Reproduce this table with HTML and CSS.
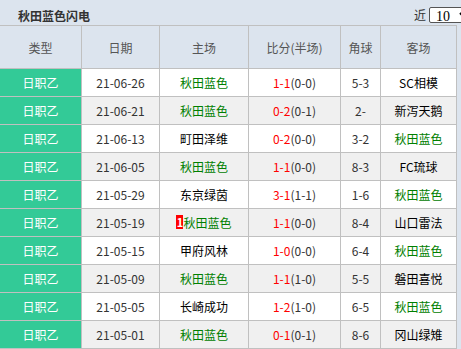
FILE: index.html
```html
<!DOCTYPE html>
<html lang="zh">
<head>
<meta charset="utf-8">
<link rel="stylesheet" href="styles.css">
</head>
<body>
<div class="bar">
  <span class="title">秋田蓝色闪电</span>
  <span class="pick">近 <select class="sel"><option>10</option><option>20</option></select></span>
</div>
<table class="grid">
  <colgroup>
    <col class="c1"><col class="c2"><col class="c3"><col class="c4"><col class="c5"><col class="c6">
  </colgroup>
  <thead>
    <tr><th>类型</th><th>日期</th><th>主场</th><th>比分(半场)</th><th>角球</th><th>客场</th></tr>
  </thead>
  <tbody>
    <tr><td class="lg">日职乙</td><td>21-06-26</td><td class="me">秋田蓝色</td><td><span class="r">1-1</span>(0-0)</td><td>5-3</td><td class="tm">SC相模</td></tr>
    <tr><td class="lg">日职乙</td><td>21-06-21</td><td class="me">秋田蓝色</td><td><span class="r">0-2</span>(0-1)</td><td>2-</td><td class="tm">新泻天鹅</td></tr>
    <tr><td class="lg">日职乙</td><td>21-06-13</td><td class="tm">町田泽维</td><td><span class="r">0-2</span>(0-0)</td><td>3-2</td><td class="me">秋田蓝色</td></tr>
    <tr><td class="lg">日职乙</td><td>21-06-05</td><td class="me">秋田蓝色</td><td><span class="r">1-1</span>(0-0)</td><td>8-3</td><td class="tm">FC琉球</td></tr>
    <tr><td class="lg">日职乙</td><td>21-05-29</td><td class="tm">东京绿茵</td><td><span class="r">3-1</span>(1-1)</td><td>1-6</td><td class="me">秋田蓝色</td></tr>
    <tr><td class="lg">日职乙</td><td>21-05-19</td><td class="me"><span class="card">1</span>秋田蓝色</td><td><span class="r">1-1</span>(0-0)</td><td>8-4</td><td class="tm">山口雷法</td></tr>
    <tr><td class="lg">日职乙</td><td>21-05-15</td><td class="tm">甲府风林</td><td><span class="r">1-0</span>(0-0)</td><td>6-4</td><td class="me">秋田蓝色</td></tr>
    <tr><td class="lg">日职乙</td><td>21-05-09</td><td class="me">秋田蓝色</td><td><span class="r">1-1</span>(1-0)</td><td>5-5</td><td class="tm">磐田喜悦</td></tr>
    <tr><td class="lg">日职乙</td><td>21-05-05</td><td class="tm">长崎成功</td><td><span class="r">1-2</span>(1-0)</td><td>6-5</td><td class="me">秋田蓝色</td></tr>
    <tr><td class="lg">日职乙</td><td>21-05-01</td><td class="me">秋田蓝色</td><td><span class="r">0-1</span>(0-1)</td><td>8-6</td><td class="tm">冈山绿雉</td></tr>
  </tbody>
</table>
</body>
</html>
```

FILE: styles.css
```css
html, body {
  margin: 0;
  padding: 0;
  background: #dce4ee;
  overflow: hidden;
  font-family: "Noto Sans CJK SC", "Noto Sans", sans-serif;
  font-size: 12px;
  color: #333;
}

.bar {
  display: flex;
  justify-content: space-between;
  align-items: flex-start;
  height: 25px;
  box-sizing: border-box;
  padding-left: 18px;
  margin-right: -12px;
}

.title {
  font-weight: bold;
  color: #333;
  line-height: 16px;
  margin-top: 8px;
}

.pick {
  display: flex;
  align-items: center;
  gap: 3px;
  margin-top: 7px;
  color: #333;
  line-height: 16px;
}

.sel {
  width: 44px;
  height: 16px;
  padding: 0 0 0 2px;
  font-family: "Liberation Serif", serif;
  font-size: 14px;
  border: 1px solid #555;
  border-radius: 2px;
  background: #fff;
  color: #000;
}

.grid {
  border-collapse: collapse;
  table-layout: fixed;
  width: 458px;
  margin-left: -1px;
}

.c1 { width: 82px; }
.c2 { width: 78px; }
.c3 { width: 89px; }
.c4 { width: 92px; }
.c5 { width: 40px; }
.c6 { width: 76px; }

.grid th, .grid td {
  border: 1px solid #c0c0c0;
  padding: 0;
  text-align: center;
  white-space: nowrap;
  overflow: hidden;
}

.grid th {
  height: 42px;
  font-weight: normal;
  color: #555;
  background: #dce4ee;
}

.grid td {
  height: 27px;
  background: #fff;
  color: #333;
}

.grid tbody tr:nth-child(even) td {
  background: #f0f0f0;
}

.grid td.lg,
.grid tbody tr:nth-child(even) td.lg {
  background: #33ca97;
  color: #fff;
}

.me { color: #008000 !important; }
.tm { color: #000 !important; }
.r { color: #ff0000; }

.card {
  display: inline-block;
  background: #ff0000;
  color: #fff;
  font-weight: bold;
  font-size: 11px;
  line-height: 14px;
  width: 7px;
  vertical-align: 1px;
}
```
